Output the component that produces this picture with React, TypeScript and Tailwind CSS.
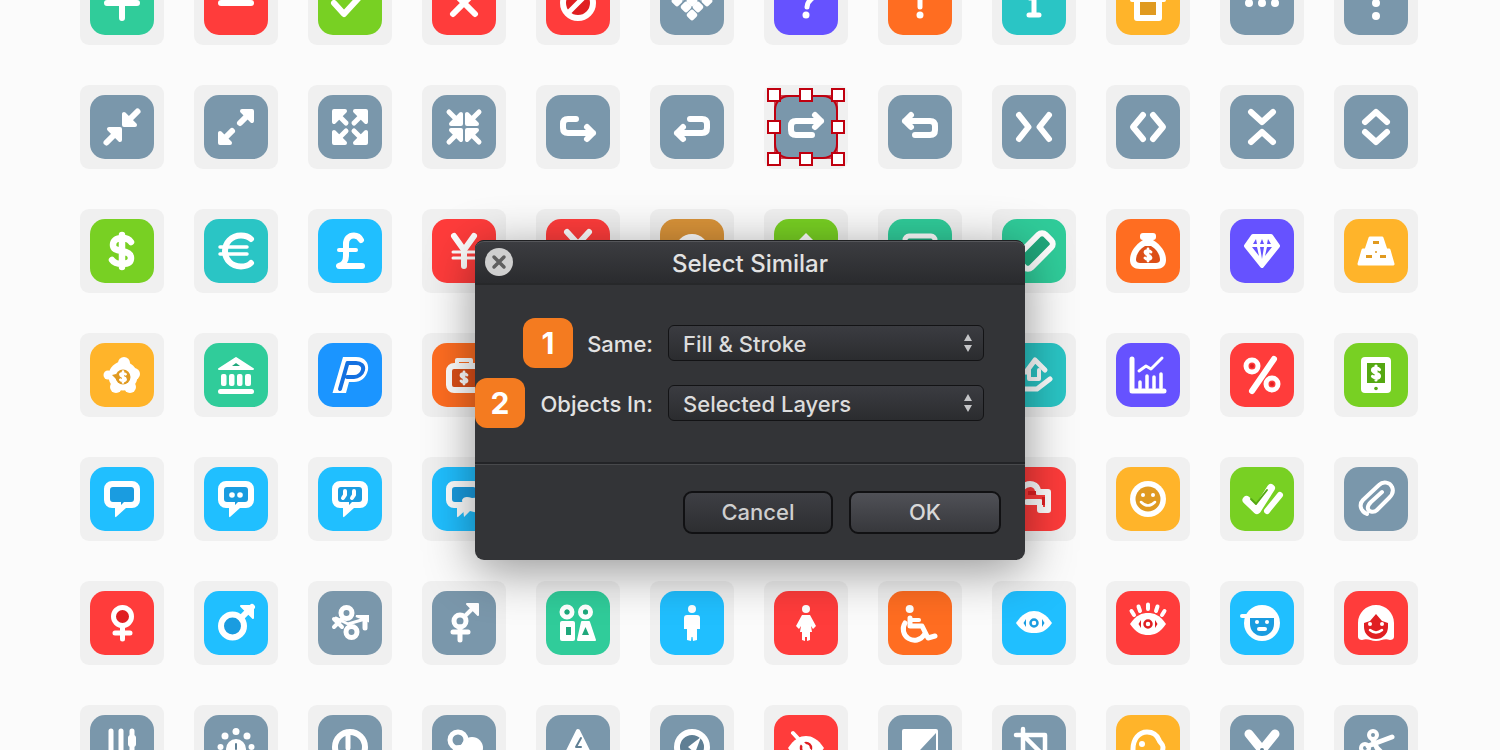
import React from "react";

const TEAL = "bg-[#30cc9a]", RED = "bg-[#ff3c3b]", LIME = "bg-[#78d023]", CY = "bg-[#2ac5c5]", BLUE = "bg-[#20bfff]", OR = "bg-[#ff6d21]", YE = "bg-[#ffb42a]", PU = "bg-[#6652ff]", SL = "bg-[#7a97ab]", PP = "bg-[#1b95ff]", TAN = "bg-[#d99339]";
const dTeal = "#1fa87c", dRed = "#e01f22", dLime = "#55a812", dBlue = "#1a9ce0", dOr = "#dc4f18", dYe = "#e09a20", dSl = "#5f7f94";

const S = ({ d, w = 6, c = "#fff" }: { d: string; w?: number; c?: string }) => (
  <path d={d} fill="none" stroke={c} strokeWidth={w} strokeLinecap="round" strokeLinejoin="round" />
);
const F = ({ d, c = "#fff" }: { d: string; c?: string }) => <path d={d} fill={c} />;
const T = ({ d, w = 4 }: { d: string; w?: number }) => (
  <path d={d} fill="#fff" stroke="#fff" strokeWidth={w} strokeLinejoin="round" />
);
const C = ({ x, y, r, c = "#fff" }: { x: number; y: number; r: number; c?: string }) => <circle cx={x} cy={y} r={r} fill={c} />;
const Ring = ({ x, y, r, w = 6, fill = "none" }: { x: number; y: number; r: number; w?: number; fill?: string }) => (
  <circle cx={x} cy={y} r={r} fill={fill} stroke="#fff" strokeWidth={w} />
);
const Mini = ({ x, y, k = 1 }: { x: number; y: number; k?: number }) => (
  <g transform={`translate(${x} ${y}) scale(${k})`}>
    <S w={2.800} d="M3 -3 C2 -4.500 -3 -5 -3 -2.500 C-3 0 3 0 3 2.500 C3 5 -2 4.500 -3 3 M0 -6 V6" />
  </g>
);
const Four = ({ children }: { children: React.ReactNode }) => (
  <>
    <g>{children}</g>
    <g transform="translate(64 0) scale(-1 1)">{children}</g>
    <g transform="translate(0 64) scale(1 -1)">{children}</g>
    <g transform="translate(64 64) scale(-1 -1)">{children}</g>
  </>
);
const Bubble = ({ dark, children }: { dark: string; children?: React.ReactNode }) => (
  <>
    <F d="M22 14 H42 a8 8 0 0 1 8 8 V33 a8 8 0 0 1 -8 8 H36 L26 50 Q25 50.500 25 49 V41 H22 a8 8 0 0 1 -8 -8 V22 a8 8 0 0 1 8 -8Z" />
    <F c={dark} d="M23 20 H41 a3 3 0 0 1 3 3 V32 a3 3 0 0 1 -3 3 H34 L31 38 V35 H23 a3 3 0 0 1 -3 -3 V23 a3 3 0 0 1 3 -3Z" />
    {children}
  </>
);

const icons: [string, React.ReactNode][] = [
  // row 0
  [TEAL, <S d="M32 14 V47 M17 32 H47" />],
  [RED, <S d="M17 32 H47" />],
  [LIME, <S d="M16 32 L26 43 L48 19" />],
  [RED, <S d="M21 43 L43 21 M21 21 L43 43" />],
  [RED, <><Ring x={32} y={32} r={15} fill={dRed} /><S d="M22 42 L42 22" w={5} /></>],
  [SL, <g fill="#fff">{[[32,16],[23,24],[41,24],[17,30],[47,30],[26,36],[38,36],[32,30],[32,44]].map(([x, y], i) => <rect key={i} x={x - 4.500} y={y - 4.500} width="9" height="9" rx="2.500" transform={`rotate(45 ${x} ${y})`} />)}</g>],
  [PU, <><S d="M24 22 C24 12 41 12 41 22 C41 28 33 28 33 36" w={5} /><C x={32} y={44} r={3.500} /></>],
  [OR, <><S d="M32 15 V36" w={5} /><C x={32} y={44} r={3.500} /></>],
  [CY, <><C x={32} y={18} r={4} /><S d="M28 27 H32 V44 M27 44 H37" w={5} /></>],
  [YE, <><rect x="21" y="27" width="22" height="20" fill={dYe} stroke="#fff" strokeWidth="6" strokeLinejoin="round" /><S d="M16 29 H48 M25 29 V20 H39 V29" w={4} /></>],
  [SL, <><C x={19} y={32} r={4} /><C x={32} y={32} r={4} /><C x={45} y={32} r={4} /></>],
  [SL, <><C x={32} y={19} r={4} /><C x={32} y={32} r={4} /><C x={32} y={45} r={4} /></>],
  // row 1
  [SL, <><T d="M34 19 V30 H45Z" /><S d="M36 28 L47.500 16.500" /><T d="M19 34 H30 V45Z" /><S d="M28 36 L16.500 47.500" /></>],
  [SL, <><T d="M48 16 H38 L48 26Z" /><S d="M42 22 L36 28" /><T d="M16 48 H26 L16 38Z" /><S d="M22 42 L28 36" /></>],
  [SL, <Four><T d="M16 16 H27 L16 27Z" /><S d="M20 20 L28 28" w={5} /></Four>],
  [SL, <Four><T d="M29 29 H19 L29 19Z" /><S d="M25 25 L17 17" w={5} /></Four>],
  [SL, <S d="M30 24 H22 Q17 24 17 29 V33 Q17 38 22 38 H47 M41 32 L47 38 L41 44" />],
  [SL, <S d="M30 24 H42 Q47 24 47 29 V33 Q47 38 42 38 H17 M23 32 L17 38 L23 44" />],
  [SL, <S d="M38 40 H22 Q17 40 17 35 V31 Q17 26 22 26 H47 M41 20 L47 26 L41 32" />],
  [SL, <S d="M27 40 H42 Q47 40 47 35 V31 Q47 26 42 26 H17 M23 20 L17 26 L23 32" />],
  [SL, <S d="M17 20 L26.500 32 L17 44 M47 20 L37.500 32 L47 44" />],
  [SL, <S d="M27 20 L17 32 L27 44 M37 20 L47 32 L37 44" />],
  [SL, <S d="M21 17 L32 27 L43 17 M21 47 L32 37 L43 47" />],
  [SL, <S d="M21 27 L32 17 L43 27 M21 37 L32 47 L43 37" />],
  // row 2
  [LIME, <S w={6.500} d="M41 23 C39 20 36 19 32 19 C26 19 23 22 23 26 C23 30 26 31 32 32 C38 33 41 35 41 39 C41 43 38 45 32 45 C28 45 24 44 22 41 M32 16 V48" />],
  [CY, <><S d="M47 20 C44 17 41 16.500 37 16.500 C27 16.500 21 24 21 32 C21 40 27 47.500 37 47.500 C41 47.500 44 47 47 44" /><S d="M16 28 H43 M16 35 H43" w={3.500} /></>],
  [BLUE, <><S d="M43 21 C41 17 38 16.500 36 16.500 C31 16.500 28 20 28 25 V37 C28 42 25 46 21 47 H44" /><S d="M21 31 H38" w={4} /></>],
  [RED, <><S d="M22 17 L32 31 L42 17 M32 31 V47" /><S d="M21 33 H43 M21 39 H43" w={3} /></>],
  [RED, <S d="M21 13 L32 25 L43 13 M32 25 V46" />],
  [TAN, <Ring x={32} y={32} r={14} />],
  [LIME, <F d="M32 14 L44 26 H20Z" />],
  [TEAL, <rect x="17" y="17" width="30" height="30" rx="4" fill={dTeal} stroke="#fff" strokeWidth="5" />],
  [TEAL, <g transform="rotate(-45 33 32)"><rect x="14" y="23" width="38" height="18" rx="5" fill={dTeal} stroke="#fff" strokeWidth="6" /></g>],
  [OR, <><rect x="24" y="14" width="16" height="7" rx="3" fill="#fff" /><F d="M27 21 C16 28 14 36 14 41 C14 47 18 50 24 50 H40 C46 50 50 47 50 41 C50 36 48 28 37 21Z" /><F c={dOr} d="M29 27 C22 31 20 37 20 41 C20 43 22 44 24 44 H40 C42 44 44 43 44 41 C44 37 42 31 35 27Z" /><Mini x={32} y={36} /></>],
  [PU, <><path d="M23 17 H41 L48 27 L32 47 L16 27Z" fill="#fff" stroke="#fff" strokeWidth="4" strokeLinejoin="round" /><g fill="#6652ff"><path d="M23 25 L26 20 L27 25Z M30 25 L32 20 L34 25Z M37 25 L38 20 L41 25Z M22 28 H27 L29 37Z M30 28 H34 L32 40Z M37 28 H42 L35 37Z" /></g></>],
  [YE, <><path d="M26 19 H38 L42 31 H45 L49 45 H15 L19 31 H22Z" fill="#fff" stroke="#fff" strokeWidth="3" strokeLinejoin="round" /><rect x="29" y="22" width="6" height="3" fill={dYe} /><rect x="22" y="36" width="6" height="3" fill={dYe} /><rect x="36" y="36" width="6" height="3" fill={dYe} /><C x={32} y={33} r={1} c={dYe} /></>],
  // row 3
  [YE, <><C x={34} y={20} r={6} /><C x={33} y={33} r={14.500} /><C x={18} y={32} r={4.500} /><C x={44} y={31} r={6} /><C x={26} y={44} r={6} /><C x={40} y={44} r={6} /><C x={33} y={34} r={7.500} c={dYe} /><F c={dYe} d="M26 31 L22 32 L26 36Z" /><Mini x={33} y={34} k={0.900} /></>],
  [TEAL, <><path d="M32 15 L49 26 H15Z" fill="#fff" stroke="#fff" strokeWidth="2" strokeLinejoin="round" /><F c={dTeal} d="M32 20 L36 23 H28Z" /><g fill="#fff"><rect x="17" y="31" width="5.500" height="12" rx="2" /><rect x="25" y="31" width="5.500" height="12" rx="2" /><rect x="33" y="31" width="5.500" height="12" rx="2" /><rect x="41" y="31" width="6" height="12" rx="2" /></g><rect x="14" y="46" width="36" height="5" rx="2.500" fill="#fff" /></>],
  [PP, <><F d="M14.500 50 L25 14 H38 C47 14 51 20 50 27 C48 35 43 39 36 39 H31 L28 50Z" /><S d="M22 46 L29.500 20 H38 C43 20 46 23 45 27 C44 31 40 34 36 34 H29" w={4} c="#1470e0" /></>],
  [OR, <><rect x="17" y="23" width="34" height="24" rx="5" fill={dOr} stroke="#fff" strokeWidth="6" /><S d="M25 22 V17 H39 V22" w={4} /><Mini x={32} y={35} /></>],
  [CY, null],
  [CY, null],
  [CY, null],
  [CY, null],
  [CY, <><S d="M24 29 L33 17 L43 27" w={5} /><S d="M27 27 V36 H31 M37 27 V36 H32" w={4} /><S d="M16 46 H35 L48 36" w={5} /></>],
  [PU, <><S d="M16 16 V48 H48" w={5} /><S d="M24 39 V45 M31 33 V45 M38 34 V45 M45 31 V45" w={3.500} /><S d="M23 28 L30 23 L35 26 L46 15" w={3} /></>],
  [RED, <><S d="M44 16 L22 48" /><Ring x={22} y={23} r={6} w={5} /><Ring x={42} y={41} r={6} w={5} /><C x={22} y={23} r={2} c={dRed} /><C x={42} y={41} r={2} c={dRed} /></>],
  [LIME, <><rect x="17" y="14" width="30" height="36" rx="4" fill="#fff" /><rect x="23" y="20" width="18" height="20" fill={dLime} /><Mini x={32} y={30} k={1.150} /><C x={32} y={45.500} r={1.800} c={dLime} /></>],
  // row 4
  [BLUE, <Bubble dark={dBlue} />],
  [BLUE, <Bubble dark={dBlue}><C x={28} y={28} r={2.800} /><C x={36} y={28} r={2.800} /></Bubble>],
  [BLUE, <Bubble dark={dBlue}><S d="M27 24 V28 L25 31 M36 24 V28 L34 31" w={4} /></Bubble>],
  [BLUE, <Bubble dark={dBlue}><F d="M30 33 Q32 28 40 31 L52 30 V44 L46 46 L38 44 L32 50Z" /></Bubble>],
  [CY, null],
  [CY, null],
  [CY, null],
  [CY, null],
  [RED, <><S d="M20 21 C27 14 36 17 36 25 H46 V43 H38 V35 H25" /><rect x="26" y="24" width="8" height="4" fill={dRed} /><rect x="40" y="30" width="3" height="8" fill={dRed} /></>],
  [YE, <><C x={32} y={32} r={18} /><C x={32} y={32} r={12.500} c={dYe} /><C x={27} y={28} r={2} /><C x={37} y={28} r={2} /><S d="M25 35 Q32 42 39 35" w={2.500} /></>],
  [LIME, <><S d="M16.500 33 L27 43 L41 21" w={8} /><S d="M21 32 L26 37 L37 23" w={2} c={dLime} /><S d="M37 44 L50 28" /></>],
  [SL, <S w={4} d="M23 47 C16 44 15 37 19 33 L35 18 C39 14 46 15 48 20 C50 24 48 28 45 31 L33 43 C30 46 25 45 24 42 C23 39 25 37 27 35 L38 25" />],
  // row 5
  [RED, <><Ring x={32.500} y={25.500} r={9} w={5} fill={dRed} /><S d="M32.500 35 V48 M25 42 H40" w={5} /></>],
  [BLUE, <><Ring x={28.500} y={35} r={11.500} fill={dBlue} /><S d="M37 27 L48 16" /><path d="M37 15 H49 V27Z" fill="#fff" stroke="#fff" strokeWidth="2" strokeLinejoin="round" /></>],
  [SL, <><Ring x={28.500} y={22} r={5.500} w={5} /><Ring x={33.500} y={41} r={5.500} w={5} /><S d="M18 27 L30 33 L47 28" w={3} /><S d="M47 27 V37" w={5} /><path d="M38 25 H50 V30Z" fill="#fff" stroke="#fff" strokeWidth="2" /><S d="M16 28 L24 36 M16 36 L24 28" w={4} /></>],
  [SL, <><Ring x={28} y={30} r={6} w={5} /><S d="M33 25 L44 14" w={4} /><path d="M35 13 H46 V24Z" fill="#fff" stroke="#fff" strokeWidth="2" strokeLinejoin="round" /><S d="M28 36 V49 M21 41 H36" w={5} /></>],
  [TEAL, <><Ring x={21} y={21} r={5} w={5} /><Ring x={39.500} y={21} r={5} w={5} /><C x={21} y={21} r={2.500} c={dTeal} /><C x={39.500} y={21} r={2.500} c={dTeal} /><rect x="14" y="30" width="15" height="20" rx="2" fill="#fff" /><rect x="20" y="36" width="5" height="8" fill={dTeal} /><path d="M36 31 H43 L49 49 H32Z" fill="#fff" stroke="#fff" strokeWidth="2" strokeLinejoin="round" /><F c={dTeal} d="M39.500 36 L43 44 H36Z" /></>],
  [BLUE, <><C x={32} y={18} r={4} /><F d="M27 24 H37 Q40 24 40 27 V38 H37 V49 L33 50 L32.500 46 H31.500 L31 50 L27 49 V38 H24 V27 Q24 24 27 24Z" /></>],
  [RED, <><C x={32} y={18} r={4} /><F d="M28 24 H36 L42 35 L39 38 L37 35 L38 41 H36 V49 L33 50 V46 H31 V50 L28 49 V41 H26 L27 35 L25 38 L22 35Z" /></>],
  [OR, <><C x={21.700} y={18} r={4} /><S d="M22 27 V35 H34 L40 47 L47 45" w={5} /><S d="M22 29 H31" w={4} /><S d="M17 32 A11 11 0 1 0 36 44" w={5} /></>],
  [BLUE, <><F d="M14 32 C20 23 26 20 32 20 C38 20 44 23 50 32 C44 41 38 42 32 42 C26 42 20 41 14 32Z" /><circle cx="32" cy="32" r="3.500" fill="#fff" stroke={dBlue} strokeWidth="2.500" /><F c={dBlue} d="M24 28 L21.500 32 L24 36Z M40 28 L42.500 32 L40 36Z" /></>],
  [RED, <><S d="M18 24 L15.500 20 M24 20 L22.500 15.500 M32 18 V13.500 M40 20 L41.500 15.500 M46 24 L48.500 20" w={4} /><F d="M14 33 C20 24 26 22 32 22 C38 22 44 24 50 33 C44 42 38 44 32 44 C26 44 20 42 14 33Z" /><circle cx="32" cy="33" r="3.500" fill="#fff" stroke={dRed} strokeWidth="2.500" /><F c={dRed} d="M25 29 L22.500 33 L25 37Z M39 29 L41.500 33 L39 37Z" /></>],
  [BLUE, <><C x={32} y={32} r={18} /><F c={dBlue} d="M20 27 H44 V33 A12 12 0 0 1 20 33Z" /><S d="M12 25 H33" w={4} /><C x={27} y={31} r={2} /><C x={37} y={31} r={2} /><rect x="27" y="36" width="10" height="4" rx="2" fill="#fff" /></>],
  [RED, <><F d="M32 14 C22 14 14 22 14 32 V46 C14 48 16 49 18 49 C24 47 26 50 32 50 C38 50 40 47 46 49 C48 49 50 48 50 46 V32 C50 22 42 14 32 14Z" /><F c={dRed} d="M20 32 L26 30 L32 23 L38 30 L44 32 V36 A12 12 0 0 1 20 36Z" /><C x={26} y={33} r={2} /><C x={38} y={33} r={2} /><S d="M26 39 Q32 44 38 39" w={2.500} /></>],
  // row 6
  [SL, <><S d="M21 16 V48 M31 16 V48 M42 16 V48" w={5} /><rect x="38" y="20" width="8" height="12" rx="3" fill="#fff" /></>],
  [SL, <><C x={32} y={16.500} r={3.500} /><C x={21} y={21} r={3.500} /><C x={43} y={21} r={3.500} /><C x={16.500} y={32} r={3} /><C x={47.500} y={32} r={3} /><C x={32} y={34} r={10} /><S d="M32 29 V34" w={2} c={dSl} /></>],
  [SL, <><Ring x={32} y={32} r={15} /><S d="M30 20 V33" w={5} /></>],
  [SL, <><Ring x={26} y={25} r={8} w={5} /><C x={40} y={33} r={11} /><C x={28} y={38} r={8} /></>],
  [SL, <><path d="M32 16 L48 48 H16Z" fill="#fff" stroke="#fff" strokeWidth="4" strokeLinejoin="round" /><S d="M35 23 L30 32 H35" w={2} c={dSl} /></>],
  [SL, <><Ring x={32} y={32} r={15} fill={dSl} /><F d="M41 22 L35 38 L28 32Z" /></>],
  [RED, <><F d="M14 33 C20 24 26 21 32 21 C38 21 44 24 50 33 C44 42 38 45 32 45 C26 45 20 42 14 33Z" /><circle cx="32" cy="33" r="5" fill="#fff" stroke={dRed} strokeWidth="2.500" /><S d="M19 18 L45 46" w={4} /></>],
  [SL, <><rect x="14" y="14" width="36" height="36" rx="2" fill="#fff" /><F c="#7a97ab" d="M48 18 V50 H18Z" /></>],
  [SL, <S d="M14 20 H43 V45 M21 14 V43 H44 M21 20 L43 42" w={4.500} />],
  [YE, <><path d="M17 34 C17 24 23 17 31 17 C37 17 41 20 43 25 C44 28 47 29 47 32 C47 40 40 47 30 47 C22 47 17 42 17 34Z" fill="none" stroke="#fff" strokeWidth="5" /><C x={26} y={29} r={3} /></>],
  [SL, <><S d="M19 19 L32 35 L45 19" w={9} /><S d="M32 35 L22 48 M32 35 L42 48" w={6} /><C x={32} y={35} r={2} c={dSl} /></>],
  [SL, <><Ring x={29} y={20} r={4} w={4} /><Ring x={21} y={33} r={4} w={4} /><S d="M29 25 L33 33 M24 31 L48 22 M33 33 L46 46" w={5} /></>],
];

const Tile = ({ color, children }: { color: string; children: React.ReactNode }) => (
  <div className="h-[84px] w-[84px] rounded-[9px] bg-[#f0f0f0] p-[10px]">
    <div className={`h-16 w-16 rounded-[15px] ${color}`}>
      <svg viewBox="0 0 64 64" className="block h-16 w-16">{children}</svg>
    </div>
  </div>
);

const h = "absolute h-[14px] w-[14px] border-2 border-[#c0000f] bg-white";
const SelectedTile = ({ children }: { children: React.ReactNode }) => (
  <div className="relative h-[84px] w-[84px] rounded-[9px] bg-[#f0f0f0] p-[10px]">
    <div className="h-16 w-16 rounded-[15px] bg-[#7a97ab]">
      <svg viewBox="0 0 64 64" className="block h-16 w-16">{children}</svg>
    </div>
    <div className="absolute left-[10px] top-[10px] h-16 w-16 rounded-[15px] border-2 border-[#c0000f]" />
    <div className="absolute left-[10px] top-[10px] h-16 w-16 border-2 border-[#c0000f]/70" />
    <div className={`${h} left-[3px] top-[3px]`} />
    <div className={`${h} left-[35px] top-[3px]`} />
    <div className={`${h} left-[67px] top-[3px]`} />
    <div className={`${h} left-[3px] top-[35px]`} />
    <div className={`${h} left-[67px] top-[35px]`} />
    <div className={`${h} left-[3px] top-[67px]`} />
    <div className={`${h} left-[35px] top-[67px]`} />
    <div className={`${h} left-[67px] top-[67px]`} />
  </div>
);

const Stepper = () => (
  <svg viewBox="0 0 10 20" className="h-5 w-[10px] shrink-0">
    <path d="M5 1 L9 8 H1Z M5 19 L1 12 H9Z" fill="#c4c5c7" />
  </svg>
);

const Select = ({ label, value }: { label: string; value: string }) => (
  <div className="flex items-center gap-[15px]">
    <span className="w-[178px] pt-[2px] text-right text-[#e2e2e2]">{label}</span>
    <div className="flex h-[36px] w-[316px] items-center justify-between rounded-[6px] border-[1.5px] border-[#131315] bg-gradient-to-b from-[#3b3c41] to-[#2b2c2f] pl-[14px] pr-[10px] text-[#dcdcdc]">
      <span className="pt-[2px]">{value}</span>
      <Stepper />
    </div>
  </div>
);

const Badge = ({ n, pos }: { n: string; pos: string }) => (
  <div className={`absolute flex h-[50px] w-[50px] items-center justify-center rounded-[12px] bg-[#f47b20] text-[30px] font-bold text-white ${pos}`}>{n}</div>
);

export default function App() {
  return (
    <div className="relative h-[750px] w-[1500px] overflow-hidden bg-[#fbfbfb] font-['Inter','Liberation_Sans',sans-serif]">
      <div className="ml-[80px] -mt-[39px] grid w-max grid-cols-12 gap-x-[30px] gap-y-[40px]">
        {icons.map(([color, icon], i) =>
          i === 18 ? <SelectedTile key={i}>{icon}</SelectedTile> : <Tile key={i} color={color}>{icon}</Tile>
        )}
      </div>

      <div className="absolute left-[475px] top-[240px] flex h-[320px] w-[550px] flex-col rounded-[9px] bg-[#333437] text-[22px] font-medium shadow-[0_10px_50px_rgba(0,0,0,0.42)]">
        <div className="relative flex h-[45px] items-center justify-center rounded-t-[9px] border-b-2 border-[#27282a] border-t border-t-[#1f2022] bg-gradient-to-b from-[#3c3d41] to-[#2a2b2e] pt-[3px] text-[24px] text-[#e2e2e2] shadow-[inset_0_1px_0_#55565a]">
          <svg viewBox="0 0 28 28" className="absolute left-[10px] top-[7px] h-7 w-7">
            <circle cx="14" cy="14" r="14" fill="#cfcfcf" />
            <path d="M9 9 L19 19 M19 9 L9 19" stroke="#5f5f5f" strokeWidth="3.500" strokeLinecap="round" />
          </svg>
          Select Similar
        </div>
        <div className="flex h-[177px] flex-col gap-[24px] pt-[40px]">
          <Select label="Same:" value="Fill & Stroke" />
          <Select label="Objects In:" value="Selected Layers" />
        </div>
        <div className="h-[3px] border-t-2 border-b border-t-[#232427] border-b-[#48494c]" />
        <div className="flex flex-1 items-start justify-end gap-4 pr-[24px] pt-[26px]">
          <button className="h-[43px] w-[150px] rounded-[9px] border-2 border-[#111113] bg-gradient-to-b from-[#3e3f44] to-[#2d2e31] text-[#cfcfcf]">Cancel</button>
          <button className="h-[43px] w-[152px] rounded-[9px] border-2 border-[#111113] bg-gradient-to-b from-[#505157] to-[#37383c] text-[#d8d8d8]">OK</button>
        </div>
        <Badge n="1" pos="left-[48px] top-[78px]" />
        <Badge n="2" pos="left-0 top-[138px]" />
      </div>
    </div>
  );
}
